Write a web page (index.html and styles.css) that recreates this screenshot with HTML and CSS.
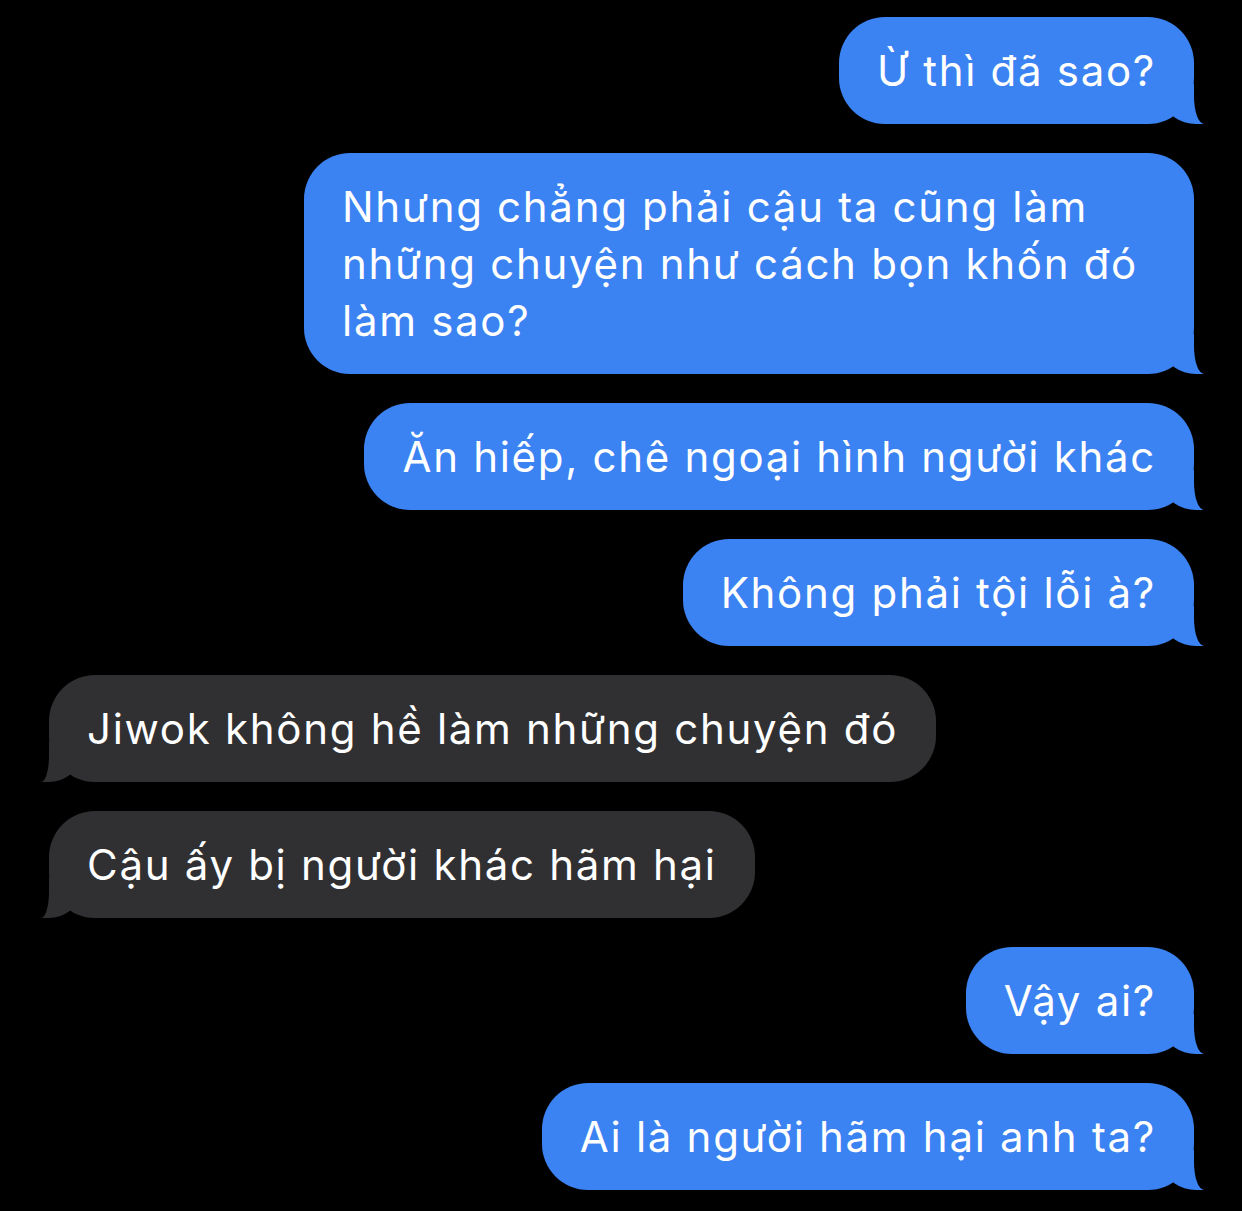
FILE: index.html
```html
<!DOCTYPE html>
<html lang="vi">
<head>
<meta charset="utf-8">
<title>Tin nhắn</title>
<link rel="stylesheet" href="styles.css">
</head>
<body>
<main class="thread">
  <div class="bubble sent">Ừ thì đã sao?</div>
  <div class="bubble sent multiline">Nhưng chẳng phải cậu ta cũng làm<br>những chuyện như cách bọn khốn đó<br>làm sao?</div>
  <div class="bubble sent">Ăn hiếp, chê ngoại hình người khác</div>
  <div class="bubble sent">Không phải tội lỗi à?</div>
  <div class="bubble received">Jiwok không hề làm những chuyện đó</div>
  <div class="bubble received">Cậu ấy bị người khác hãm hại</div>
  <div class="bubble sent">Vậy ai?</div>
  <div class="bubble sent">Ai là người hãm hại anh ta?</div>
</main>
</body>
</html>
```
FILE: styles.css
```css
html, body {
  margin: 0;
  background: #000;
}
body {
  width: 1242px;
  height: 1211px;
  overflow: hidden;
  font-family: Inter, "Noto Sans", sans-serif;
}
.thread {
  display: flex;
  flex-direction: column;
  gap: 29px;
  padding: 17px 48px 0 49px;
}
.bubble {
  position: relative;
  padding: 25px 38px;
  font-size: 42px;
  line-height: 57px;
  letter-spacing: 1.7px;
  color: #fff;
  white-space: nowrap;
  border-radius: 46px;
}
.multiline {
  padding-right: 56px;
}
.sent {
  align-self: flex-end;
  background: #3b82f2;
}
.received {
  align-self: flex-start;
  background: #303032;
}
.bubble::before,
.bubble::after {
  content: "";
  position: absolute;
  bottom: 0;
}
.sent::before {
  right: -10px;
  width: 38px;
  height: 40px;
  background: #3b82f2;
  border-bottom-left-radius: 30px 22px;
}
.sent::after {
  left: 100%;
  width: 30px;
  height: 50px;
  background: #000;
  border-bottom-left-radius: 10px 28px;
}
.received::before {
  left: -8px;
  width: 36px;
  height: 40px;
  background: #303032;
  border-bottom-right-radius: 28px 22px;
}
.received::after {
  right: 100%;
  width: 30px;
  height: 50px;
  background: #000;
  border-bottom-right-radius: 8px 26px;
}
```
